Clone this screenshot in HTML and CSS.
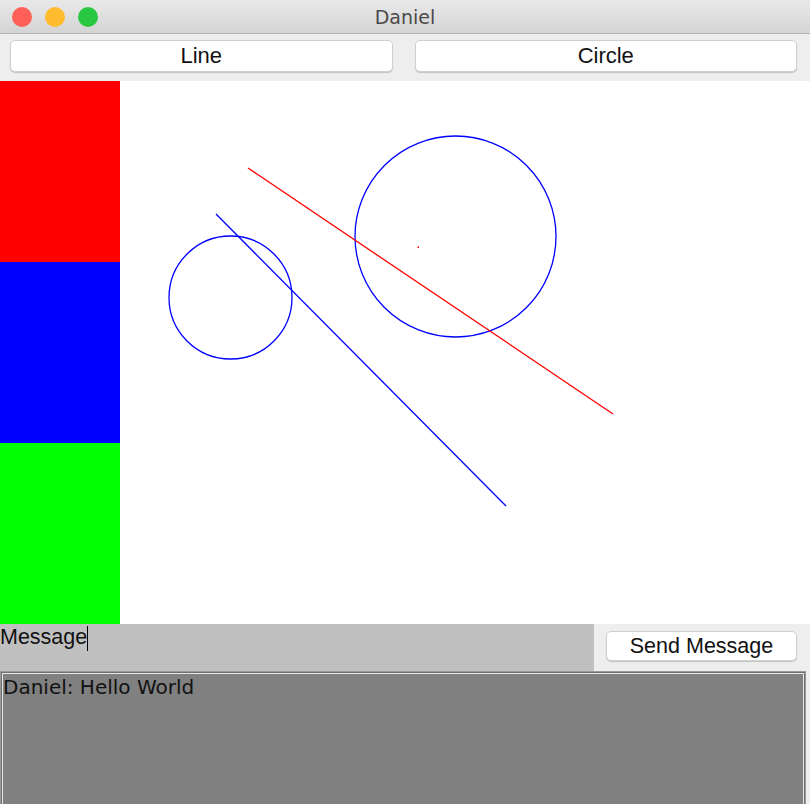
FILE: index.html
```html
<!DOCTYPE html>
<html>
<head>
<meta charset="utf-8">
<link rel="stylesheet" href="styles.css">
</head>
<body>
<div class="window">
  <div class="titlebar">
    <div class="lights">
      <span class="light red"></span>
      <span class="light yellow"></span>
      <span class="light green"></span>
    </div>
    <div class="title">Daniel</div>
  </div>
  <div class="toolbar">
    <button class="btn">Line</button>
    <button class="btn">Circle</button>
  </div>
  <div class="main">
    <div class="palette">
      <div class="swatch sw-red"></div>
      <div class="swatch sw-blue"></div>
      <div class="swatch sw-green"></div>
    </div>
    <div class="canvas">
      <svg class="drawing" width="690" height="543" viewBox="0 0 690 543">
        <circle cx="110.5" cy="216.5" r="61.5" fill="none" stroke="#0000ff" stroke-width="1.3"/>
        <circle cx="335.5" cy="155.5" r="100.5" fill="none" stroke="#0000ff" stroke-width="1.3"/>
        <line x1="128" y1="87" x2="493" y2="333" stroke="#ff0000" stroke-width="1.3"/>
        <line x1="96" y1="133" x2="386" y2="425" stroke="#0000ff" stroke-width="1.3"/>
        <rect x="297.5" y="165.5" width="1.5" height="1.5" fill="#ff0000"/>
      </svg>
    </div>
  </div>
  <div class="msgbar">
    <div class="field"><span class="field-text">Message</span><span class="caret"></span></div>
    <div class="send-area">
      <button class="btn send">Send Message</button>
    </div>
  </div>
  <div class="chat">
    <div class="chat-text">Daniel: Hello World</div>
  </div>
</div>
</body>
</html>
```

FILE: styles.css
```css
html, body {
  margin: 0;
  padding: 0;
  background: #eeeeee;
}

.window {
  width: 810px;
  height: 804px;
  display: flex;
  flex-direction: column;
  overflow: hidden;
  background: #eeeeee;
}

.titlebar {
  height: 33px;
  border-bottom: 1px solid #b5b5b5;
  background: linear-gradient(#e9e9e9, #d4d4d4);
  position: relative;
  display: flex;
  align-items: center;
  justify-content: center;
  flex: none;
}

.lights {
  position: absolute;
  left: 12px;
  top: 7px;
  display: flex;
  gap: 13px;
}

.light {
  width: 20px;
  height: 20px;
  border-radius: 50%;
  display: block;
}

.red { background: #fe5f57; }
.yellow { background: #febc2e; }
.green { background: #28c840; }

.title {
  font-family: "DejaVu Sans", sans-serif;
  font-size: 19px;
  color: #4a4a4a;
}

.toolbar {
  height: 47px;
  box-sizing: border-box;
  padding: 6px 13px 9px 10px;
  display: flex;
  gap: 22px;
  flex: none;
}

.btn {
  background: #ffffff;
  border: 1px solid #cfcfcf;
  border-radius: 5px;
  box-shadow: 0 1px 1px rgba(0, 0, 0, 0.18);
  font-family: "Liberation Sans", Arial, sans-serif;
  font-size: 22px;
  color: #111111;
  padding: 0;
  margin: 0;
}

.toolbar .btn {
  flex: 1;
  height: 32px;
}

.main {
  height: 543px;
  display: flex;
  flex: none;
}

.palette {
  width: 120px;
  display: flex;
  flex-direction: column;
}

.swatch {
  height: 181px;
}

.sw-red { background: #ff0000; }
.sw-blue { background: #0000ff; }
.sw-green { background: #00ff00; }

.canvas {
  flex: 1;
  background: #ffffff;
}

.drawing {
  display: block;
}

.msgbar {
  height: 47px;
  display: flex;
  flex: none;
}

.field {
  width: 594px;
  background: #c0c0c0;
  display: flex;
  align-items: flex-start;
}

.field-text {
  font-family: "Liberation Sans", Arial, sans-serif;
  font-size: 21.5px;
  color: #111111;
  line-height: 25px;
  margin-top: 1px;
}

.caret {
  width: 1px;
  height: 25px;
  background: #000000;
  margin-top: 2px;
}

.send-area {
  flex: 1;
  padding: 7px 13px 0 12px;
  display: flex;
  align-items: flex-start;
}

.btn.send {
  flex: 1;
  height: 30px;
  font-size: 21.5px;
}

.chat {
  height: 150px;
  flex: none;
  box-sizing: border-box;
  background: #808080;
  border: 1px solid #9a9a9a;
  box-shadow: inset 0 0 0 1px #6e6e6e, inset 0 0 0 2px #e8e8e8;
  margin-right: 4px;
  padding: 6px 4px 4px 3px;
}

.chat-text {
  font-family: "DejaVu Sans", sans-serif;
  font-size: 20px;
  color: #111111;
  line-height: 23px;
  margin-top: -2px;
  margin-left: -1px;
}
```
